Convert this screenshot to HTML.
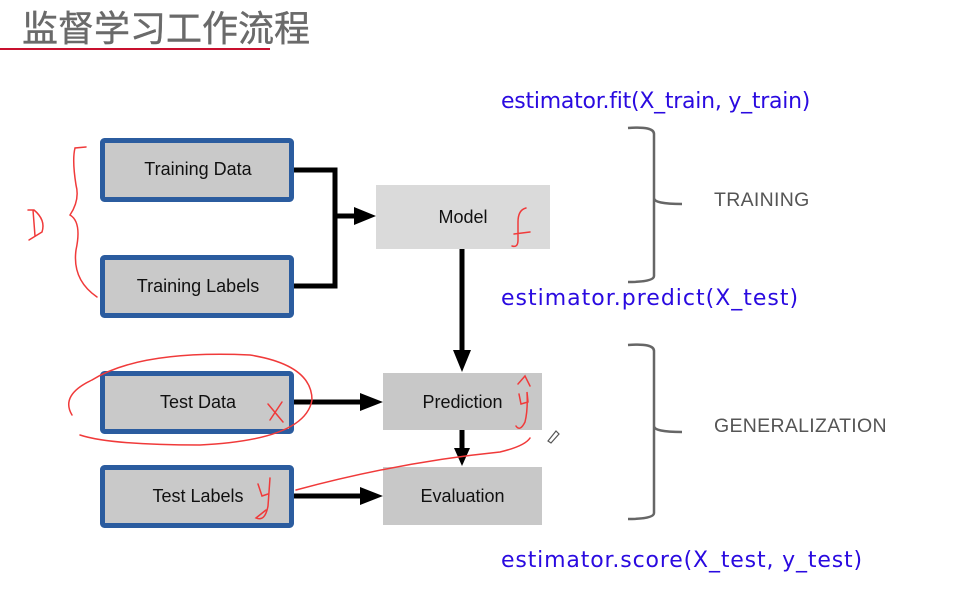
<!DOCTYPE html>
<html><head><meta charset="utf-8"><style>
html,body{margin:0;padding:0;background:#fff;width:953px;height:608px;overflow:hidden;position:relative;font-family:"Liberation Sans",Arial,sans-serif}
.t{position:absolute;white-space:nowrap}
.title{left:22px;top:0px;font-size:36px;color:#6a6a6a;font-family:"Liberation Sans","Noto Sans CJK SC",sans-serif;-webkit-text-stroke:0.4px #6a6a6a}
.code{font-size:22px;color:#2a0ae0;font-family:"DejaVu Sans","Liberation Sans",sans-serif}
.lab{font-size:19.5px;color:#555;letter-spacing:0.3px}
.bx{font-size:18px;color:#111;text-align:center}
</style></head><body>
<svg width="953" height="608" style="position:absolute;left:0;top:0">
<line x1="0" y1="49" x2="270" y2="49" stroke="#c8102e" stroke-width="2"/>
<g fill="#c9c9c9" stroke="#2b5c9f" stroke-width="5">
<rect x="102.5" y="140.5" width="189" height="59" rx="2"/>
<rect x="102.5" y="257.5" width="189" height="58" rx="2"/>
<rect x="102.5" y="373.5" width="189" height="58" rx="2"/>
<rect x="102.5" y="467.5" width="189" height="58" rx="2"/>
</g>
<rect x="376" y="185" width="174" height="64" fill="#dadada"/>
<rect x="383" y="373" width="159" height="57" fill="#c8c8c8"/>
<rect x="383" y="467" width="159" height="58" fill="#c8c8c8"/>
<g stroke="#000" stroke-width="5" fill="none">
<polyline points="294,170 335,170 335,286 294,286"/>
<line x1="335" y1="216" x2="356" y2="216"/>
<line x1="462" y1="249" x2="462" y2="352"/>
<line x1="294" y1="402" x2="362" y2="402"/>
<line x1="462" y1="430" x2="462" y2="450"/>
<line x1="294" y1="496" x2="362" y2="496"/>
</g>
<g fill="#000">
<polygon points="354,207 376,216 354,225"/>
<polygon points="453,350 462,372 471,350"/>
<polygon points="360,393 383,402 360,411"/>
<polygon points="454,448 462,466 470,448"/>
<polygon points="360,487 383,496 360,505"/>
</g>
<g stroke="#666" stroke-width="2.5" fill="none">
<path d="M628,128 Q654,126 654,134 L654,198 Q654,204 682,204 M654,198 Q654,206 654,212 L654,276 Q654,282 628,282"/>
<path d="M628,345 Q654,343 654,351 L654,426 Q654,432 682,432 M654,426 Q654,434 654,440 L654,513 Q654,519 628,519"/>
</g>
<g stroke="#f03a3a" stroke-width="1.5" fill="none" stroke-linecap="round">
<path d="M86,147 L75,148 Q72,160 76,185 Q80,200 70,215 Q82,222 76,250 Q72,280 97,297"/>
<path d="M28,210 L34,210 Q46,220 42,232 L29,240 M33,210 L35,236"/>
<path d="M92,380 Q140,350 250,355 Q312,365 312,400 Q305,440 200,445 Q110,445 80,435 M72,415 Q60,395 92,380"/>
<path d="M270,420 L282,402 M268,404 L283,422"/>
<path d="M530,232 L514,234 M526,208 Q518,210 518,222 L518,240 Q518,248 512,246"/>
<path d="M518,384 L525,376 L530,386 M519,394 L521,404 L528,402 L527,392 Q528,410 525,422 Q520,432 516,426"/>
<path d="M258,484 L262,496 L268,494 M270,478 L268,506 Q265,522 256,518 L266,510"/>
<path d="M296,490 Q400,462 500,452 Q525,446 530,438"/>
</g>
<path d="M548,441 L556,431 L559,434 L551,443 Z" fill="none" stroke="#555" stroke-width="1.2"/>
</svg>
<div class="t title">监督学习工作流程</div>
<div class="t code" style="left:501px;top:89px;letter-spacing:-0.25px">estimator.fit(X_train, y_train)</div>
<div class="t code" style="left:501px;top:286px;letter-spacing:1px">estimator.predict(X_test)</div>
<div class="t code" style="left:501px;top:548px;letter-spacing:0.85px">estimator.score(X_test, y_test)</div>
<div class="t lab" style="left:714px;top:189px">TRAINING</div>
<div class="t lab" style="left:714px;top:415px">GENERALIZATION</div>
<div class="t bx" style="left:102px;width:192px;top:159px">Training Data</div>
<div class="t bx" style="left:102px;width:192px;top:276px">Training Labels</div>
<div class="t bx" style="left:102px;width:192px;top:392px">Test Data</div>
<div class="t bx" style="left:102px;width:192px;top:486px">Test Labels</div>
<div class="t bx" style="left:376px;width:174px;top:207px">Model</div>
<div class="t bx" style="left:383px;width:159px;top:392px">Prediction</div>
<div class="t bx" style="left:383px;width:159px;top:486px">Evaluation</div>
</body></html>
